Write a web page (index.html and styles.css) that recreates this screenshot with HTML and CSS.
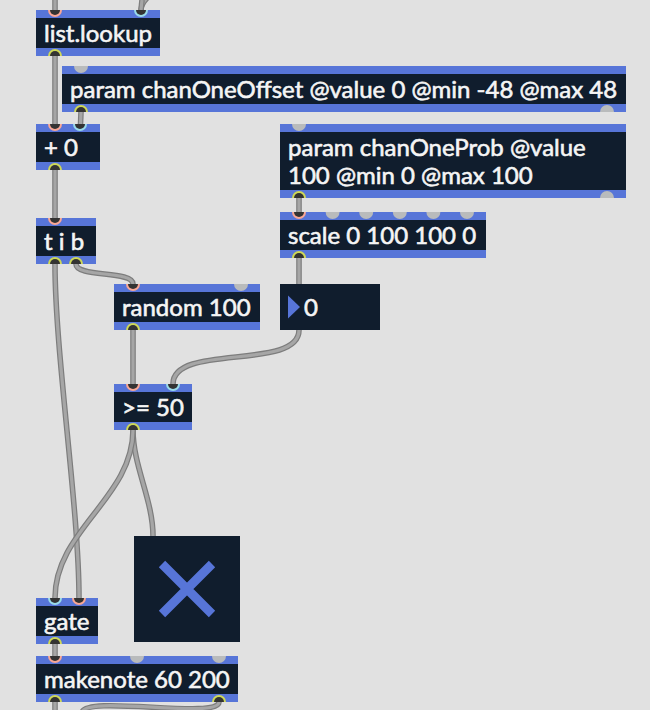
FILE: index.html
```
<!DOCTYPE html>
<html lang="en">
<head>
  <meta charset="UTF-8">
  <meta name="viewport" content="width=device-width, initial-scale=1.0">
  <title>Patcher</title>
  <link rel="stylesheet" href="styles.css">
</head>
<body>
  <div class="patcher">
    <!-- Patch cords -->
    <svg class="cords" width="650" height="710">
      <defs>
        <g id="cord-paths">
          <path d="M55 0V10" />
          <path d="M55 56V124" />
          <path d="M81 112L80.5 124" />
          <path d="M55 170V218" />
          <path d="M55 264C55 354 79 508 79 598" />
          <path d="M76 264C76 278 133 270 133 284" />
          <path d="M299 198V212" />
          <path d="M299 258V284" />
          <path d="M133 330V384" />
          <path d="M299 330C299 371 173 343 173 384" />
          <path d="M133 430C133 466 153 500 153 536" />
          <path d="M55 644V656" />
          <path d="M55 702V710" />
          <path d="M219 702C219 720 82 694 82 713" />
        </g>
      </defs>
      <path class="cord-edge" d="M141 10C141 5 144 1 148 -3" />
      <path class="cord-fill" d="M141 10C141 5 144 1 148 -3" />
      <path class="cord-edge" d="M141 10L142 0" />
      <path class="cord-fill" d="M141 10L142 0" />
      <use class="cord-edge" href="#cord-paths" />
      <use class="cord-fill" href="#cord-paths" />
      <path class="cord-edge" d="M133 430C133 498 55 530 55 598" />
      <path class="cord-fill" d="M133 430C133 498 55 530 55 598" />
    </svg>

    <!-- Objects -->
    <div class="box lookup">list.lookup</div>
    <div class="box param-offset">param chanOneOffset @value 0 @min -48 @max 48</div>
    <div class="box plus">+ 0</div>
    <div class="box param-prob">param chanOneProb @value 100 @min 0 @max 100</div>
    <div class="box trigger">t i b</div>
    <div class="box scale">scale 0 100 100 0</div>
    <div class="box random">random 100</div>
    <div class="box compare">&gt;= 50</div>
    <div class="box gate">gate</div>
    <div class="box makenote">makenote 60 200</div>

    <div class="number">
      <svg width="12" height="24" viewBox="0 0 12 24"><path d="M0 0.5L12 12L0 23.5Z" /></svg>
      <span>0</span>
    </div>

    <div class="toggle">
      <svg width="58" height="58" viewBox="0 0 58 58"><path d="M4 4L54 54M54 4L4 54" /></svg>
    </div>

    <!-- Inlets and outlets -->
    <svg class="ports" width="650" height="710">
      <defs>
        <g id="inlet">
          <path d="M-7 0A7 7 0 0 0 7 0Z" />
          <path class="hole" d="M-5 0A5 5 0 0 0 5 0Z" />
        </g>
        <g id="outlet">
          <path d="M-7 0A7 7 0 0 1 7 0Z" />
          <path class="hole" d="M-5 0A5 5 0 0 1 5 0Z" />
        </g>
        <path id="inlet-off" d="M-7 0A7 7 0 0 0 7 0Z" />
        <path id="outlet-off" d="M-7 0A7 7 0 0 1 7 0Z" />
      </defs>
      <g class="hot">
        <use href="#inlet" x="55" y="10" />
        <use href="#inlet" x="55" y="124" />
        <use href="#inlet" x="55" y="218" />
        <use href="#inlet" x="299" y="212" />
        <use href="#inlet" x="133" y="284" />
        <use href="#inlet" x="133" y="384" />
        <use href="#inlet" x="79" y="598" />
        <use href="#inlet" x="55" y="656" />
      </g>
      <g class="cold">
        <use href="#inlet" x="141" y="10" />
        <use href="#inlet" x="80" y="124" />
        <use href="#inlet" x="173" y="384" />
        <use href="#inlet" x="55" y="598" />
      </g>
      <g class="out">
        <use href="#outlet" x="55" y="56" />
        <use href="#outlet" x="81" y="112" />
        <use href="#outlet" x="55" y="170" />
        <use href="#outlet" x="299" y="198" />
        <use href="#outlet" x="299" y="258" />
        <use href="#outlet" x="55" y="264" />
        <use href="#outlet" x="76" y="264" />
        <use href="#outlet" x="133" y="330" />
        <use href="#outlet" x="133" y="430" />
        <use href="#outlet" x="55" y="644" />
        <use href="#outlet" x="55" y="702" />
        <use href="#outlet" x="219" y="702" />
      </g>
      <g class="off">
        <use href="#inlet-off" x="81" y="66" />
        <use href="#inlet-off" x="299" y="124" />
        <use href="#inlet-off" x="332.6" y="212" />
        <use href="#inlet-off" x="366.2" y="212" />
        <use href="#inlet-off" x="399.8" y="212" />
        <use href="#inlet-off" x="433.4" y="212" />
        <use href="#inlet-off" x="467" y="212" />
        <use href="#inlet-off" x="241" y="284" />
        <use href="#inlet-off" x="137" y="656" />
        <use href="#inlet-off" x="219" y="656" />
        <use href="#outlet-off" x="607" y="112" />
        <use href="#outlet-off" x="607" y="198" />
      </g>
    </svg>
  </div>
</body>
</html>
```
FILE: styles.css
```
body {
  margin: 0;
  background-color: #e1e1e1;
  font-family: Lato, sans-serif;
  font-size: 24px;
  line-height: 28px;
  color: #f5f5f5;
}

.patcher {
  position: relative;
  width: 650px;
  height: 710px;
  overflow: hidden;
}

.cords, .ports {
  position: absolute;
  left: 0;
  top: 0;
}

/* Patch cords */
.cord-edge, .cord-fill { fill: none; }
.cord-edge { stroke: #7d7d7d; stroke-width: 5.6; }
.cord-fill { stroke: #a6a6a6; stroke-width: 3.2; }

/* Object boxes */
.box, .number, .toggle {
  position: absolute;
  box-sizing: border-box;
  background-color: #101d2d;
}

.box {
  height: 46px;
  padding: 1px 8px;
  border-top: 8px solid #5775d8;
  border-bottom: 8px solid #5775d8;
  white-space: nowrap;
  -webkit-text-stroke: 0.6px #f5f5f5;
}

.lookup { left: 36px; top: 10px; width: 124px; }
.param-offset { left: 62px; top: 66px; width: 564px; }
.plus { left: 36px; top: 124px; width: 64px; }
.param-prob { left: 280px; top: 124px; width: 346px; height: 74px; white-space: normal; }
.trigger { left: 36px; top: 218px; width: 60px; }
.scale { left: 280px; top: 212px; width: 206px; }
.random { left: 114px; top: 284px; width: 146px; }
.compare { left: 114px; top: 384px; width: 78px; }
.gate { left: 36px; top: 598px; width: 62px; }
.makenote { left: 36px; top: 656px; width: 202px; }

.number {
  left: 280px;
  top: 284px;
  width: 100px;
  height: 46px;
  padding-left: 8px;
  display: flex;
  align-items: center;
  gap: 4px;
  -webkit-text-stroke: 0.6px #f5f5f5;
}

.number svg { fill: #5775d8; }

.toggle {
  left: 134px;
  top: 536px;
  width: 106px;
  height: 106px;
  display: flex;
  justify-content: center;
  align-items: center;
}

.toggle svg {
  fill: none;
  stroke: #5775d8;
  stroke-width: 9;
}

/* Inlets and outlets */
.hole { fill: #333; }
.hot { fill: #f9a795; }
.cold { fill: #99dbe9; }
.out { fill: #cfd857; }
.off { fill: #b9bbbc; }
```
